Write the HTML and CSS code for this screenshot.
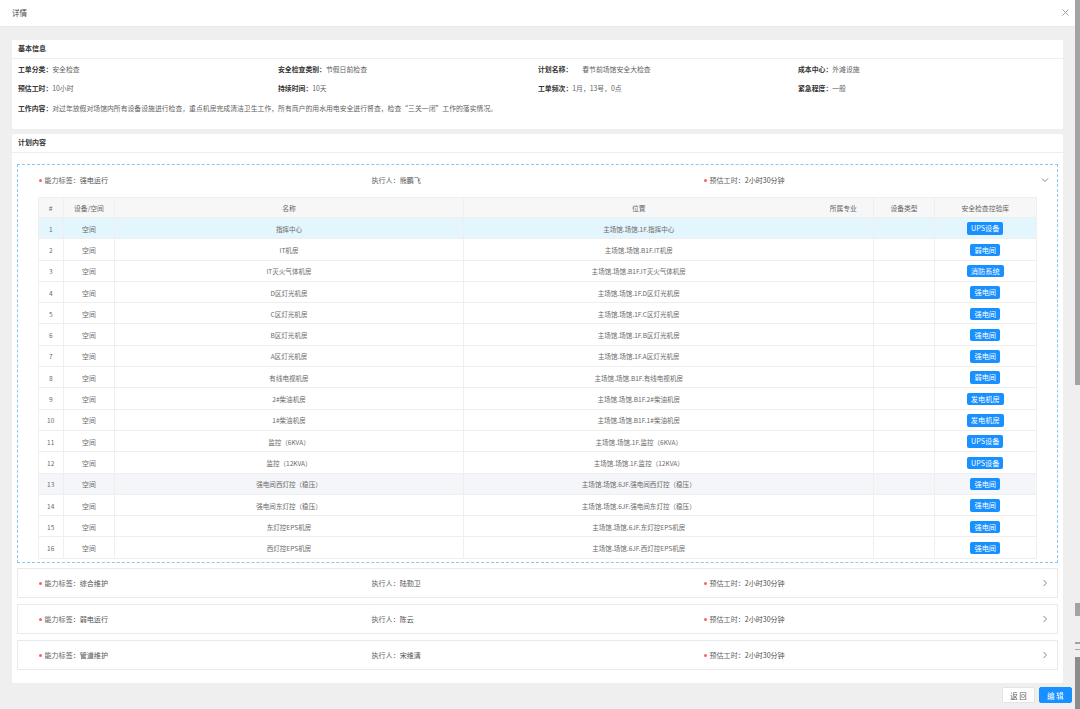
FILE: index.html
```html
<!DOCTYPE html>
<html lang="zh-CN">
<head>
<meta charset="utf-8">
<title>详情</title>
<link rel="stylesheet" href="styles.css">
</head>
<body>
<div class="dialog">
  <header class="dialog-head">
    <span class="dialog-title">详情</span>
    <svg class="close" viewBox="0 0 8 8" width="7" height="7"><path d="M0.5 0.5L7.5 7.5M7.5 0.5L0.5 7.5"/></svg>
  </header>
  <main class="dialog-body">
    <section class="card card-info">
      <h2 class="card-title">基本信息</h2>
      <div class="fields">
        <div class="field"><b>工单分类&#xFF1A;</b>安全检查</div>
        <div class="field"><b>安全检查类别&#xFF1A;</b>节假日前检查</div>
        <div class="field"><b>计划名称&#xFF1A;</b><span class="masked">春节前场馆安全大检查</span></div>
        <div class="field"><b>成本中心&#xFF1A;</b>外滩设施</div>
        <div class="field"><b>预估工时&#xFF1A;</b>10小时</div>
        <div class="field"><b>持续时间&#xFF1A;</b>10天</div>
        <div class="field"><b>工单频次&#xFF1A;</b>1月&#xFF0C;13号&#xFF0C;0点</div>
        <div class="field"><b>紧急程度&#xFF1A;</b>一般</div>
      </div>
      <p class="field work"><b>工作内容&#xFF1A;</b>对过年放假对场馆内所有设备设施进行检查&#xFF0C;重点机房完成清洁卫生工作&#xFF0C;所有商户的用水用电安全进行督查&#xFF0C;检查&#x201C;三关一闭&#x201D;工作的落实情况&#x3002;</p>
    </section>
    <section class="card card-plan">
      <h2 class="card-title">计划内容</h2>
      <div class="panels">
        <div class="panel open">
          <div class="panel-head">
            <div class="pf"><i></i>能力标签&#xFF1A;<span>强电运行</span></div>
            <div class="pf">执行人&#xFF1A;<span>熊鹏飞</span></div>
            <div class="pf"><i></i>预估工时&#xFF1A;<span>2小时30分钟</span></div>
            <svg class="chev" viewBox="0 0 8 8" width="8" height="8"><path d="M1 2.5L4 5.5L7 2.5"/></svg>
          </div>
          <table class="grid">
            <colgroup>
              <col class="c1"><col class="c2"><col class="c3"><col class="c4"><col class="c5"><col class="c6"><col class="c7">
            </colgroup>
            <thead>
              <tr><th>#</th><th>设备/空间</th><th>名称</th><th>位置</th><th>所属专业</th><th>设备类型</th><th>安全检查控验库</th></tr>
            </thead>
            <tbody>
              <tr class="sel"><td>1</td><td>空间</td><td>指挥中心</td><td>主场馆.场馆.1F.指挥中心</td><td></td><td></td><td><span class="tag">UPS设备</span></td></tr>
              <tr><td>2</td><td>空间</td><td>IT机房</td><td>主场馆.场馆.B1F.IT机房</td><td></td><td></td><td><span class="tag">弱电间</span></td></tr>
              <tr><td>3</td><td>空间</td><td>IT灭火气体机房</td><td>主场馆.场馆.B1F.IT灭火气体机房</td><td></td><td></td><td><span class="tag">消防系统</span></td></tr>
              <tr><td>4</td><td>空间</td><td>D区灯光机房</td><td>主场馆.场馆.1F.D区灯光机房</td><td></td><td></td><td><span class="tag">强电间</span></td></tr>
              <tr><td>5</td><td>空间</td><td>C区灯光机房</td><td>主场馆.场馆.1F.C区灯光机房</td><td></td><td></td><td><span class="tag">强电间</span></td></tr>
              <tr><td>6</td><td>空间</td><td>B区灯光机房</td><td>主场馆.场馆.1F.B区灯光机房</td><td></td><td></td><td><span class="tag">强电间</span></td></tr>
              <tr><td>7</td><td>空间</td><td>A区灯光机房</td><td>主场馆.场馆.1F.A区灯光机房</td><td></td><td></td><td><span class="tag">强电间</span></td></tr>
              <tr><td>8</td><td>空间</td><td>有线电视机房</td><td>主场馆.场馆.B1F.有线电视机房</td><td></td><td></td><td><span class="tag">弱电间</span></td></tr>
              <tr><td>9</td><td>空间</td><td>2#柴油机房</td><td>主场馆.场馆.B1F.2#柴油机房</td><td></td><td></td><td><span class="tag">发电机房</span></td></tr>
              <tr><td>10</td><td>空间</td><td>1#柴油机房</td><td>主场馆.场馆.B1F.1#柴油机房</td><td></td><td></td><td><span class="tag">发电机房</span></td></tr>
              <tr><td>11</td><td>空间</td><td>监控&#xFF08;6KVA&#xFF09;</td><td>主场馆.场馆.1F.监控&#xFF08;6KVA&#xFF09;</td><td></td><td></td><td><span class="tag">UPS设备</span></td></tr>
              <tr><td>12</td><td>空间</td><td>监控&#xFF08;12KVA&#xFF09;</td><td>主场馆.场馆.1F.监控&#xFF08;12KVA&#xFF09;</td><td></td><td></td><td><span class="tag">UPS设备</span></td></tr>
              <tr class="hover"><td>13</td><td>空间</td><td>强电间西灯控&#xFF08;稳压&#xFF09;</td><td>主场馆.场馆.6JF.强电间西灯控&#xFF08;稳压&#xFF09;</td><td></td><td></td><td><span class="tag">强电间</span></td></tr>
              <tr><td>14</td><td>空间</td><td>强电间东灯控&#xFF08;稳压&#xFF09;</td><td>主场馆.场馆.6JF.强电间东灯控&#xFF08;稳压&#xFF09;</td><td></td><td></td><td><span class="tag">强电间</span></td></tr>
              <tr><td>15</td><td>空间</td><td>东灯控EPS机房</td><td>主场馆.场馆.6JF.东灯控EPS机房</td><td></td><td></td><td><span class="tag">强电间</span></td></tr>
              <tr><td>16</td><td>空间</td><td>西灯控EPS机房</td><td>主场馆.场馆.6JF.西灯控EPS机房</td><td></td><td></td><td><span class="tag">强电间</span></td></tr>
            </tbody>
          </table>
        </div>
        <div class="panel closed">
          <div class="panel-head">
            <div class="pf"><i></i>能力标签&#xFF1A;<span>综合维护</span></div>
            <div class="pf">执行人&#xFF1A;<span>陆勤卫</span></div>
            <div class="pf"><i></i>预估工时&#xFF1A;<span>2小时30分钟</span></div>
            <svg class="chev" viewBox="0 0 8 8" width="8" height="8"><path d="M2.5 1L5.5 4L2.5 7"/></svg>
          </div>
        </div>
        <div class="panel closed">
          <div class="panel-head">
            <div class="pf"><i></i>能力标签&#xFF1A;<span>弱电运行</span></div>
            <div class="pf">执行人&#xFF1A;<span>陈云</span></div>
            <div class="pf"><i></i>预估工时&#xFF1A;<span>2小时30分钟</span></div>
            <svg class="chev" viewBox="0 0 8 8" width="8" height="8"><path d="M2.5 1L5.5 4L2.5 7"/></svg>
          </div>
        </div>
        <div class="panel closed">
          <div class="panel-head">
            <div class="pf"><i></i>能力标签&#xFF1A;<span>管道维护</span></div>
            <div class="pf">执行人&#xFF1A;<span>宋维清</span></div>
            <div class="pf"><i></i>预估工时&#xFF1A;<span>2小时30分钟</span></div>
            <svg class="chev" viewBox="0 0 8 8" width="8" height="8"><path d="M2.5 1L5.5 4L2.5 7"/></svg>
          </div>
        </div>
      </div>
    </section>
  </main>
  <footer class="dialog-foot">
    <button class="btn">返 回</button>
    <button class="btn primary">编 辑</button>
  </footer>
</div>
<aside class="scroll">
  <div class="thumb t1"></div>
  <div class="thumb t2"></div>
  <div class="thumb t3"></div>
  <div class="thumb t4"></div>
  <div class="thumb t5"></div>
</aside>
</body>
</html>
```
FILE: styles.css
```css
* { box-sizing: border-box; }
html, body { margin: 0; height: 709px; overflow: hidden; }
body {
  display: flex;
  width: 1080px;
  background: #efefef;
  font-family: "Noto Sans CJK SC", "Liberation Sans", sans-serif;
  font-size: 7px;
  color: #555;
}
.dialog {
  width: 1075px;
  height: 709px;
  display: flex;
  flex-direction: column;
  filter: blur(0.3px);
}
.dialog-head {
  height: 27px;
  flex: none;
  background: #fff;
  border-bottom: 1px solid #e8e8e8;
  display: flex;
  align-items: center;
  justify-content: space-between;
  padding: 0 6px 1px 12px;
}
.dialog-title { font-size: 7.5px; color: #444; }
.close path { stroke: #999; stroke-width: 1; fill: none; }
.dialog-body {
  flex: none;
  height: 656px;
  padding: 13px 12px 0;
  display: flex;
  flex-direction: column;
  gap: 5px;
}
.card { background: #fff; border-radius: 2px; }
.card-info { height: 89px; flex: none; }
.card-plan { height: 549px; flex: none; }
.card-title {
  margin: 0;
  height: 19px;
  line-height: 17px;
  padding: 0 6px;
  font-size: 7px;
  font-weight: 700;
  color: #333;
  border-bottom: 1px solid #eee;
}
.fields {
  display: grid;
  grid-template-columns: repeat(4, 260px);
  grid-auto-rows: 19px;
  padding: 1px 6px 0;
  align-items: center;
}
.field { font-size: 6.85px; line-height: 19px; color: #5f5f5f; white-space: nowrap; }
.field b { font-weight: 700; color: #333; }
.masked { margin-left: 10px; }
.work { margin: 1px 0 0; padding: 0 6px; }
.panels {
  padding: 11px 5px 0;
  display: flex;
  flex-direction: column;
  gap: 6px;
}
.panel { border: 1px solid #eaeaea; }
.panel.open { border: 1px dashed #8cc6f3; height: 399px; margin-bottom: -1px; }
.panel.closed { height: 30px; }
.panel-head {
  display: flex;
  align-items: center;
  height: 32px;
  padding: 0 0 2px 21px;
  font-size: 7.05px;
  color: #5f5f5f;
}
.closed .panel-head { height: 28px; padding-bottom: 0; }
.pf { width: 332.5px; flex: none; white-space: nowrap; }
.pf i {
  display: inline-block;
  width: 3px;
  height: 3px;
  margin-right: 2.5px;
  border-radius: 50%;
  background: #f5606a;
  vertical-align: 1px;
}
.pf span { color: #505050; }
.chev { flex: none; margin-left: 4.5px; }
.chev path { stroke: #777; stroke-width: 0.9; fill: none; }
.grid {
  width: 998px;
  margin-left: 19.5px;
  border-collapse: collapse;
  table-layout: fixed;
  font-size: 6.55px;
  color: #6a6a6a;
}
.c1 { width: 25.5px; }
.c2 { width: 51px; }
.c3 { width: 349px; }
.c4 { width: 350px; }
.c5 { width: 60px; }
.c6 { width: 61px; }
.c7 { width: 101.5px; }
.grid th, .grid td {
  border: 1px solid #efefef;
  text-align: center;
  padding: 0;
  font-weight: 400;
  overflow: hidden;
  white-space: nowrap;
}
.grid th { height: 20px; background: #f7f7f7; color: #666; font-size: 6.8px; }
.grid td { height: 21.3px; padding-top: 1px; }
.grid td:nth-child(2) { font-size: 6.9px; }
.grid th:nth-child(4), .grid td:nth-child(4) { border-right: none; }
.grid th:nth-child(5), .grid td:nth-child(5) { border-left: none; }
.sel td { background: #e3f5fd; }
.hover td { background: #f4f6f9; }
.tag {
  display: inline-block;
  height: 12.5px;
  line-height: 12.5px;
  padding: 0 4px;
  border-radius: 2px;
  background: #1890ff;
  color: #fff;
  font-size: 7.2px;
  vertical-align: middle;
}
.dialog-foot {
  flex: 1;
  display: flex;
  justify-content: flex-end;
  align-items: flex-start;
  gap: 4px;
  padding: 4px 3px 0 0;
}
.btn {
  width: 33px;
  height: 16px;
  padding: 0;
  border: 1px solid #e4e4e4;
  border-radius: 2px;
  background: #fff;
  font: inherit;
  font-size: 7.5px;
  color: #555;
}
.btn.primary { background: #1890ff; border-color: #1890ff; color: #fff; }
.scroll {
  width: 5px;
  height: 709px;
  flex: none;
  display: flex;
  flex-direction: column;
  background: #efefef;
}
.thumb { background: #a3a3a3; flex: none; }
.t1 { height: 385px; margin-bottom: 218px; }
.t2 { height: 13px; margin-bottom: 26px; }
.t3 { height: 2px; margin-bottom: 5px; }
.t4 { height: 1px; margin-bottom: 7px; }
.t5 { height: 52px; background: #8c8c8c; }
```
